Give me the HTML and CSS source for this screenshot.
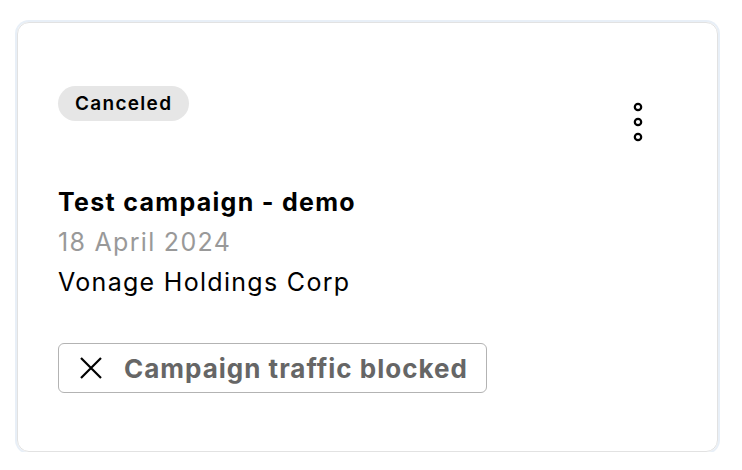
FILE: index.html
```html
<!DOCTYPE html>
<html lang="en">
<head>
  <meta charset="UTF-8" />
  <title>Campaign card</title>
  <link rel="stylesheet" href="styles.css">
</head>
<body>
  <div class="card">
    <div class="card-top">
      <span class="status">Canceled</span>
      <button class="menu" aria-label="More options">
        <svg width="14" height="44" viewBox="0 0 14 44">
          <circle cx="7" cy="7" r="3.2" fill="none" stroke="#000" stroke-width="2.2"/>
          <circle cx="7" cy="22" r="3.2" fill="none" stroke="#000" stroke-width="2.2"/>
          <circle cx="7" cy="37" r="3.2" fill="none" stroke="#000" stroke-width="2.2"/>
        </svg>
      </button>
    </div>

    <div class="info">
      <div class="title">Test campaign - demo</div>
      <div class="date">18 April 2024</div>
      <div class="company">Vonage Holdings Corp</div>
    </div>

    <div class="blocked">
      <svg width="24" height="24" viewBox="0 0 24 24">
        <path d="M2 2 L22 22 M22 2 L2 22" stroke="#000" stroke-width="2.2" fill="none"/>
      </svg>
      <span>Campaign traffic blocked</span>
    </div>
  </div>
</body>
</html>
```

FILE: styles.css
```css
body {
  margin: 0;
  padding: 22px 24px 0 17px;
  font-family: 'Inter', sans-serif;
  background: #fff;
  color: #000;
}

.card {
  height: 430px;
  box-sizing: border-box;
  border: 1px solid #e2e2e2;
  border-radius: 12px;
  box-shadow: 0 0 0 2px #e8eff7;
  padding: 63px 40px 0 40px;
}

.card-top {
  display: flex;
  justify-content: space-between;
  align-items: flex-start;
}

.status {
  display: inline-block;
  background: #e6e6e6;
  border-radius: 18px;
  padding: 0 17px 0 17px;
  height: 35px;
  line-height: 36px;
  font-size: 19px;
  font-weight: 600;
  letter-spacing: 1.3px;
}

.menu {
  border: none;
  background: none;
  padding: 0;
  margin: 14px 32px 0 0;
  cursor: pointer;
}

.menu svg {
  display: block;
}

.info {
  margin-top: 38px;
  font-size: 25px;
  line-height: 40px;
  letter-spacing: 1.3px;
}

.title {
  font-weight: 700;
}

.date {
  color: #999;
}

.blocked {
  display: inline-flex;
  align-items: center;
  gap: 21px;
  margin-top: 41px;
  height: 50px;
  box-sizing: border-box;
  border: 1.5px solid #b3b3b3;
  border-radius: 6px;
  padding: 0 18px 0 20px;
  font-size: 26px;
  font-weight: 700;
  letter-spacing: 1px;
  color: #666;
}

.blocked svg {
  display: block;
}
```
